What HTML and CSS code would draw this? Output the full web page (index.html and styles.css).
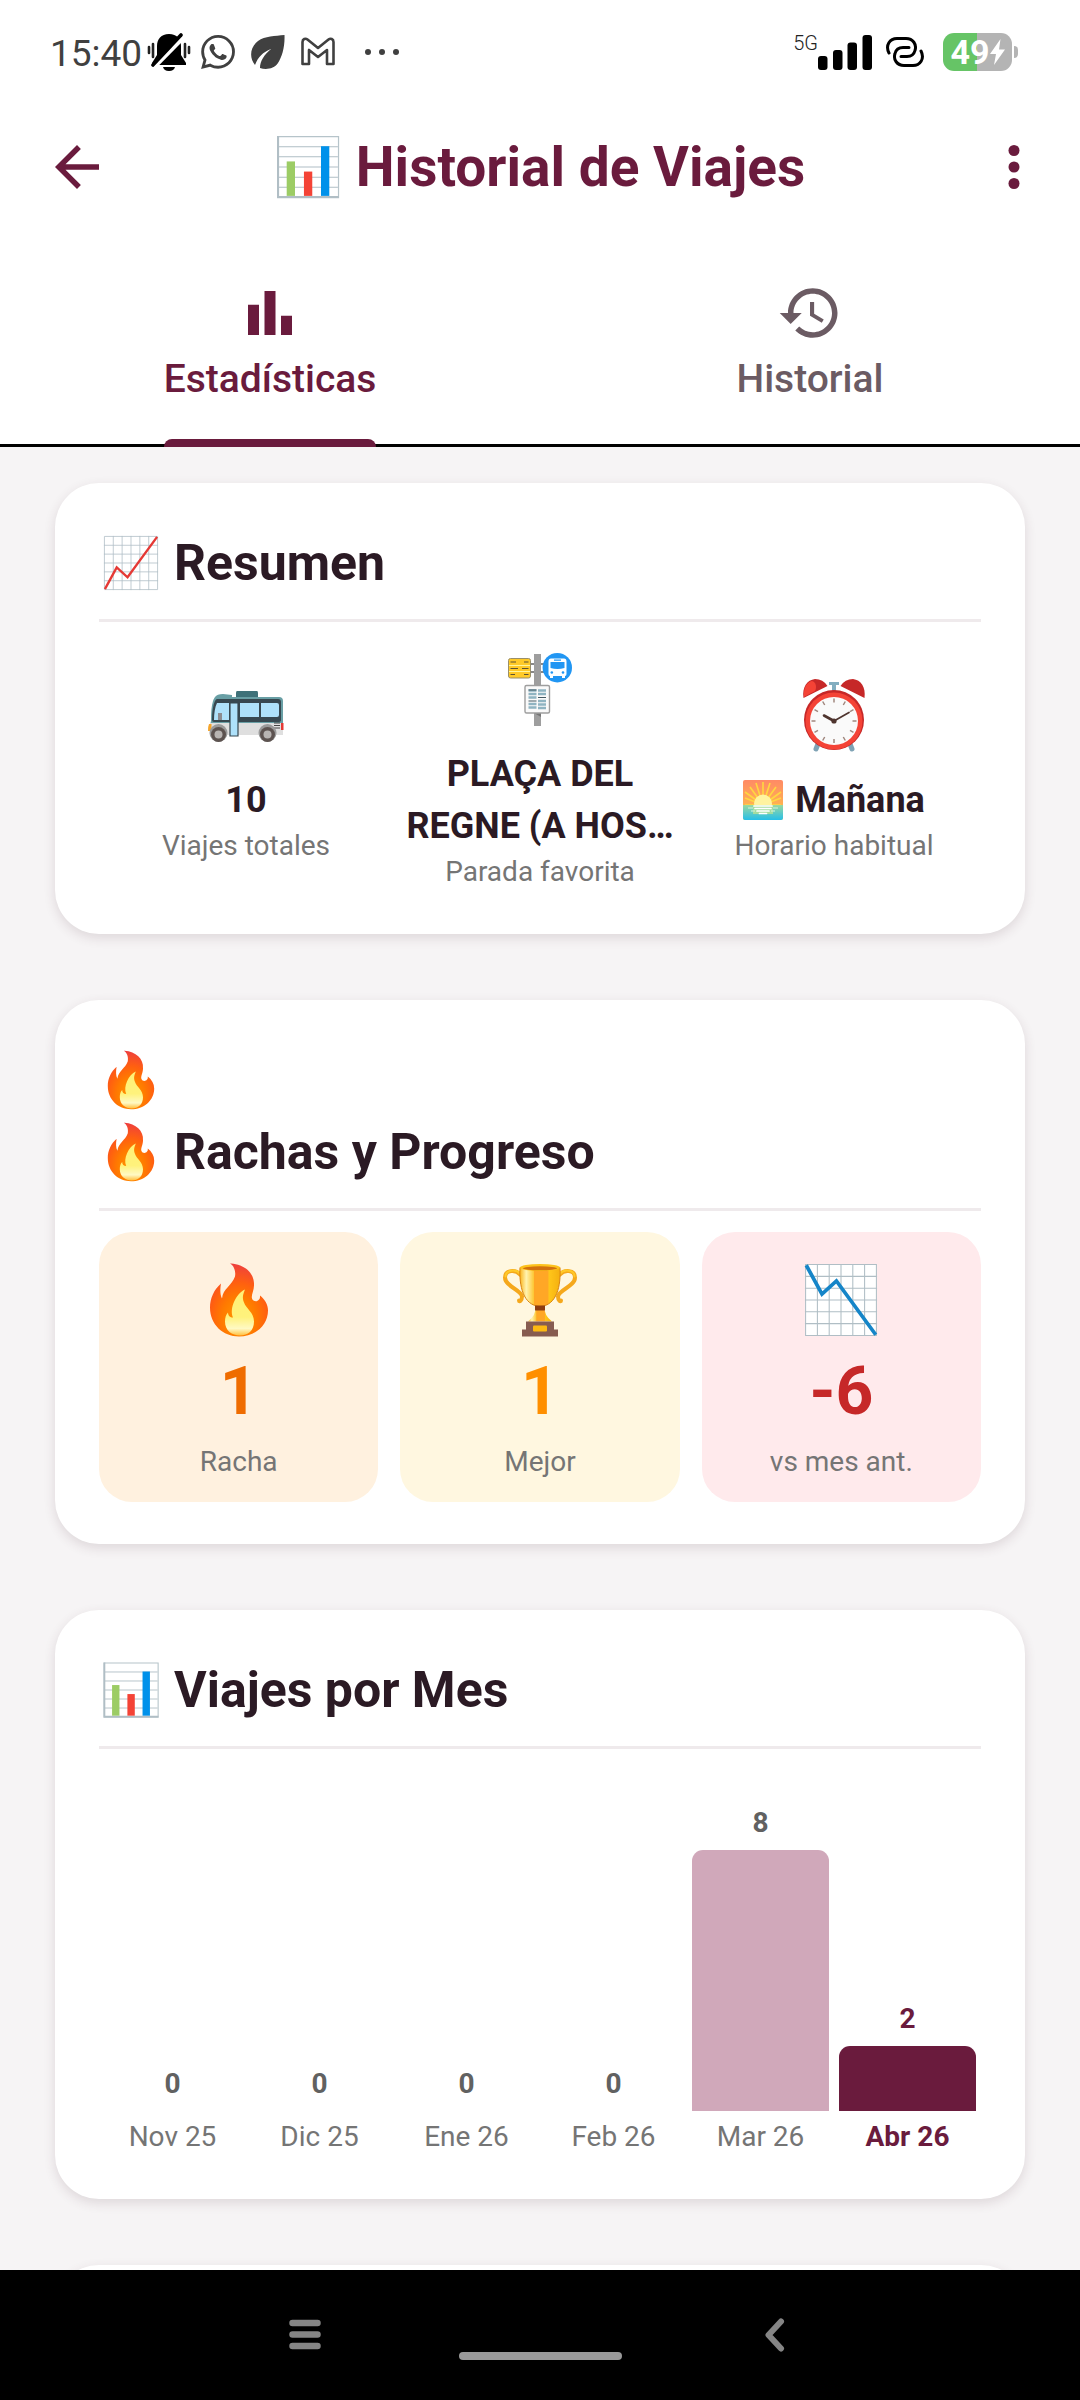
FILE: index.html
```html
<!DOCTYPE html>
<html lang="es">
<head>
<meta charset="utf-8">
<meta name="viewport" content="width=device-width, initial-scale=1">
<title>Historial de Viajes</title>
<link rel="stylesheet" href="styles.css">
</head>
<body>
<svg class="defs" aria-hidden="true">
  <defs>
    <radialGradient id="flame" cx="0.5" cy="0.75" r="0.75">
      <stop offset="0" stop-color="#ff9800"/>
      <stop offset="0.4" stop-color="#ff7a00"/>
      <stop offset="0.65" stop-color="#ff6010"/>
      <stop offset="1" stop-color="#ee3f3f"/>
    </radialGradient>
    <linearGradient id="flame-core" x1="0" y1="0" x2="0" y2="1">
      <stop offset="0" stop-color="#fff176"/>
      <stop offset="0.6" stop-color="#fff27c"/>
      <stop offset="0.85" stop-color="#fff9c4"/>
      <stop offset="1" stop-color="#ffc040"/>
    </linearGradient>
    <linearGradient id="sky" x1="0" y1="0" x2="0" y2="1">
      <stop offset="0" stop-color="#ff8a65"/>
      <stop offset="1" stop-color="#ffc947"/>
    </linearGradient>
    <linearGradient id="sea" x1="0" y1="0" x2="0" y2="1">
      <stop offset="0" stop-color="#9bd8a0"/>
      <stop offset="1" stop-color="#26bfe8"/>
    </linearGradient>
    <linearGradient id="gold" x1="0" y1="0" x2="1" y2="0">
      <stop offset="0" stop-color="#fbb51c"/>
      <stop offset="0.16" stop-color="#fff3b0"/>
      <stop offset="0.34" stop-color="#fdc838"/>
      <stop offset="0.36" stop-color="#ffa726"/>
      <stop offset="0.7" stop-color="#ffa726"/>
      <stop offset="0.72" stop-color="#ffc61a"/>
      <stop offset="1" stop-color="#f5b010"/>
    </linearGradient>
    <symbol id="e-bars" viewBox="-5 -5 71 71">
      <path fill="#fff" d="M0 0h61v61H0z"/>
      <path stroke="#b0bec5" stroke-width="1" d="M1 10.500h59M1 20.500h59M1 30.500h59M1 40.500h59M1 50.500h59"/>
      <path fill="none" stroke="#b6c4ca" stroke-width="1.200" d="M.6 .6h60v60H.6z"/>
      <path stroke="#b0bec5" stroke-width="2" d="M1 0v61M0 60h61"/>
      <path fill="#9ccc65" d="M9.500 25h8.200v34H9.500z"/>
      <path fill="#f44336" d="M26.500 35h8.200v24h-8.200z"/>
      <path fill="#0091ea" d="M43.300 10h8.200v49h-8.200z"/>
    </symbol>
    <g id="grid">
      <path fill="#fff" d="M0 0h55v55H0z"/>
      <path stroke="#b0bec5" stroke-width=".8" fill="none" d="M.5 .5h54v54H.5zM9.500 0v55M18.500 0v55M27.500 0v55M36.500 0v55M45.500 0v55M0 9.500h55M0 18.500h55M0 27.500h55M0 36.500h55M0 45.500h55"/>
    </g>
    <symbol id="e-up" viewBox="-5 -5 65 65">
      <use href="#grid"/>
      <path fill="none" stroke="#e53935" stroke-width="2.400" d="M1 54 13 32l11 10L54 1"/>
    </symbol>
    <symbol id="e-down" viewBox="-3 -3 61 61">
      <use href="#grid"/>
      <path fill="none" stroke="#1585c8" stroke-width="2.800" d="M1 1l12 22 11-10 30 41"/>
    </symbol>
    <symbol id="e-fire" viewBox="-11 -3.500 80 80">
      <path fill="url(#flame)" d="M21 0C35 1 45 10 44 22c0 5-3 10-2 13 1 3 5 4 7 1 1-1 1-2 1-4 5 4 8 9 8 15 0 15-13 26-29 26S0 61 0 44c0-9 4-18 11-24-1 6-1 11 1 15C13 25 22 22 25 13c1-5-1-11-5-13z"/>
      <path fill="url(#flame-core)" d="M35 26c-2 5-3 8-1 13 2 6 10 10 10 19 0 9-6 14-14 14s-15-5-15-14c0-4 1-7 3-9 0 3 2 5 5 5-4-9 3-24 12-28z"/>
    </symbol>
    <symbol id="e-bus" viewBox="-2 -15 80 80">
      <path fill="#3f7179" d="M29 0h20q1 0 1 2v4H28V2q0-2 1-2z"/>
      <path fill="#699fa5" d="M3 30C3 18 4 10 7 6q2-3 8-3l9 1v2h47q4 0 4 4v24H2z"/>
      <path fill="#dfdfdf" d="M2 32h73v12H2z"/>
      <path fill="#374850" d="M9 8h61q3 0 3 3v18q0 2-3 2H6q-2 0-2-2c0-8 1-15 3-19q1-2 2-2z"/>
      <path fill="#aee1fa" d="M9 12h12v17H6c0-7 1-13 3-17zM32 12h19v14H32zM53 12h16q2 0 2 2v10q0 2-2 2H53z"/>
      <path fill="#aee1fa" stroke="#374850" stroke-width="1.200" d="M22 12h8v33h-8z"/>
      <path fill="#8c8c90" d="M10 22h4v7h-4z"/>
      <path fill="#f5a52c" d="M1 33h2.500v7H0q0-5 1-7z"/>
      <path fill="#e53935" d="M73 32h2.500v7H73z"/>
      <path stroke="#444" stroke-width="1" d="M66 32h6M66 34.500h6M66 37h6"/>
      <g fill="#5d5350"><circle cx="10.500" cy="42" r="9" fill="#9a9a9a"/><circle cx="59.500" cy="42" r="9" fill="#9a9a9a"/><circle cx="10.500" cy="43.500" r="7.500"/><circle cx="59.500" cy="43.500" r="7.500"/></g>
      <g fill="#b8b4b2"><circle cx="10.500" cy="43.500" r="4"/><circle cx="59.500" cy="43.500" r="4"/></g>
    </symbol>
    <symbol id="e-stop" viewBox="-8 -3 80 80">
      <path fill="#9e9e9e" d="M26 1h7v72h-7z"/>
      <path fill="#757575" d="M26 60h7v4z"/>
      <path stroke="#616161" stroke-width="1.500" d="M22 11h4M22 19h4M33 11h5M33 19h5"/>
      <rect x=".5" y="5.500" width="22" height="19.500" rx="2" fill="#ffca28" stroke="#9a8f6a"/>
      <path stroke="#fff59d" stroke-width="1.200" d="M1 12.500h21M1 18.500h21"/>
      <path stroke="#5c5234" stroke-width="1.100" d="M2.500 9H8M16 9h4.500M2.500 15.500H10M14 15.500h6.500M2.500 21.500H7M16 21.500h4.500"/>
      <circle cx="49.300" cy="14.700" r="14.700" fill="#2196f3"/>
      <path fill="#fff" d="M43 5.500h13q2.500 0 2.500 3V21q0 2-1.500 2v2h-3v-2h-9v2h-3v-2q-1.500 0-1.500-2V8.500q0-3 2.500-3z"/>
      <path fill="#2196f3" d="M46 6.500h7v1.300h-7zM42.500 9h14v6q-7 2-14 0z"/>
      <circle cx="43.800" cy="19.500" r="1.300" fill="#2196f3"/><circle cx="55" cy="19.500" r="1.300" fill="#2196f3"/>
      <rect x="17" y="32.500" width="24.500" height="27.500" rx="1.500" fill="#fafafa" stroke="#9e9e9e" stroke-width="1.400"/>
      <path stroke="#8fb4c2" stroke-width="2.600" d="M20.500 37.500h8M20.500 41h8M20.500 44.500h8M20.500 51h8M20.500 54.500h8M30 37.500h8M30 41h8M30 48h8M30 51.500h8M30 55h8"/>
      <path stroke="#455a64" stroke-width="1.200" d="M20.500 37h8M20.500 48h8M30 44.500h8"/>
    </symbol>
    <symbol id="e-clock" viewBox="-9 -3 80 80">
      <path stroke="#7fa3b5" stroke-width="5" stroke-linecap="round" d="M15 65l-2 5M47 65l2 5"/>
      <path fill="#82aec0" d="M26 3h10v3h-3v7h-4V6h-3z"/>
      <path fill="#c62828" d="M.5 19C-1 8 4 1 12 0q8 0 12.500 7zM61.500 19C63 8 58 1 50 0q-8 0-12.500 7z"/>
      <path fill="#f44336" d="M1 18C0 9 4 3 9 2c4 1 5 6 3 10z"/>
      <circle cx="31" cy="41" r="30" fill="#c62828"/>
      <circle cx="31" cy="42" r="28.500" fill="#f44336"/>
      <circle cx="31" cy="42" r="24" fill="#fafafa"/>
      <path stroke="#a1887f" stroke-width="1.500" d="M31 19.500v4M31 60v4M8.500 42h4M49.500 42h4M19.700 22.500l2 3.500M42.300 22.500l-2 3.500M11.500 30.700l3.500 2M50.500 30.700l-3.500 2M11.500 53.300l3.500-2M50.500 53.300l-3.500-2M19.700 61.500l2-3.500M42.300 61.500l-2-3.500"/>
      <path stroke="#4e342e" stroke-width="2.600" stroke-linecap="round" d="M31 42l-10-5.500"/>
      <path stroke="#4e342e" stroke-width="1.700" stroke-linecap="round" d="M31 42l15-8.500"/>
      <circle cx="31" cy="42" r="2.600" fill="#4e342e"/>
    </symbol>
    <symbol id="e-sunrise" viewBox="0 0 40 40">
      <rect width="40" height="40" rx="2" fill="url(#sky)"/>
      <path stroke="#ffd740" stroke-width="1.600" d="M20 25V2M20 25 13 3M20 25 27 3M20 25 7 7M20 25 33 7M20 25 2 12M20 25 38 12M20 25 2 18M20 25 38 18M20 25H2M20 25h18"/>
      <path fill="url(#sea)" d="M0 25h40v13q0 2-2 2H2q-2 0-2-2z"/>
      <circle cx="20" cy="23.500" r="9" fill="#fff3a0"/>
      <path fill="#a4dca0" d="M10 25h20v9H10z"/>
      <path stroke="#fff" stroke-width="1.700" stroke-linecap="round" d="M11 26h18M12 28.500h16M14 31h12M16.500 33.500h7"/>
      <path stroke="#d6f3dc" stroke-width="1" d="M5 28h5M8 31h4M30 28h5M28 31h4"/>
    </symbol>
    <symbol id="e-trophy" viewBox="-3 -3.500 80 80">
      <path fill="none" stroke="#f5a81c" stroke-width="4" stroke-linecap="round" d="M17 11C13 6 2 6 2 14c0 9 16 12 17 19 0 4-3 6-3 4M57 11c4-5 15-5 15 3 0 9-16 12-17 19 0 4 3 6 3 4"/>
      <path fill="none" stroke="#ffc928" stroke-width="2" stroke-linecap="round" d="M17 10C13 5.500 2.500 6 2.500 13M57 10c4-4.500 14.500-4 14.500 3"/>
      <path fill="url(#gold)" d="M33 42h8q0 10 8 16H25q8-6 8-16z"/>
      <path fill="url(#gold)" stroke="#d98410" stroke-width="1" d="M17 4h40c1 18-3 38-20 39C20 42 16 22 17 4z"/>
      <ellipse cx="37" cy="4" rx="20" ry="3.500" fill="#fdc21c"/>
      <ellipse cx="37" cy="4.800" rx="17" ry="2" fill="#d2700e"/>
      <path fill="#8d3d12" d="M32 42h10v5H32z"/>
      <path fill="#875c50" d="M23 58h28v8h4v7H19v-7h4z"/>
      <rect x="30" y="62" width="14" height="6" rx="1" fill="#fcb912"/>
    </symbol>
  </defs>
</svg>

<div class="app">
  <header class="status">
    <div class="status-left">
      <span class="time">15:40</span>
      <svg class="ic-bell" viewBox="0 0 44 38" aria-hidden="true">
        <path d="M22 1c8 0 12 5 12 12v9l5 8v2H5v-2l5-8v-9C10 6 14 1 22 1zM16 34h12q-1 4-6 4t-6-4z"/>
        <path d="M2 14v6M6 11v13M38 11v13M42 14v6" stroke="#222" stroke-width="2.600" stroke-linecap="round"/>
        <path d="M3 37 34 6" stroke="#fff" stroke-width="3"/>
        <path d="M6 32 34 2" stroke="#000" stroke-width="3.600" stroke-linecap="round"/>
        <path d="M8 34.500 37 5" stroke="#fff" stroke-width="2.500"/>
      </svg>
      <div class="notes">
        <svg class="ic-note" viewBox="0 0 24 24" fill="#404040" aria-hidden="true"><path d="M17.472 14.382c-.297-.149-1.758-.867-2.030-.967-.273-.099-.471-.148-.67.15-.197.297-.767.966-.94 1.164-.173.199-.347.223-.644.075-.297-.15-1.255-.463-2.390-1.475-.883-.788-1.480-1.761-1.653-2.059-.173-.297-.018-.458.13-.606.134-.133.298-.347.446-.52.149-.174.198-.298.298-.497.099-.198.05-.371-.025-.52-.075-.149-.669-1.612-.916-2.207-.242-.579-.487-.5-.669-.51-.173-.008-.371-.01-.57-.01-.198 0-.52.074-.792.372-.272.297-1.040 1.016-1.040 2.479 0 1.462 1.065 2.875 1.213 3.074.149.198 2.096 3.200 5.077 4.487.709.306 1.262.489 1.694.625.712.227 1.360.195 1.871.118.571-.085 1.758-.719 2.006-1.413.248-.694.248-1.289.173-1.413-.074-.124-.272-.198-.57-.347m-5.421 7.403h-.004a9.870 9.870 0 01-5.031-1.378l-.361-.214-3.741.982.998-3.648-.235-.374a9.860 9.860 0 01-1.510-5.260c.001-5.450 4.436-9.884 9.888-9.884 2.640 0 5.122 1.030 6.988 2.898a9.825 9.825 0 012.893 6.994c-.003 5.450-4.437 9.884-9.885 9.884m8.413-18.297A11.815 11.815 0 0012.050 0C5.495 0 .16 5.335.157 11.892c0 2.096.547 4.142 1.588 5.945L.057 24l6.305-1.654a11.882 11.882 0 005.683 1.448h.005c6.554 0 11.890-5.335 11.893-11.893a11.821 11.821 0 00-3.480-8.413z"/></svg>
        <svg class="ic-note" viewBox="0 0 34 34" fill="#404040" aria-hidden="true"><path d="M33.500 0C34 12 31 22 27 28c-4 6-12 7-18 5 0-7 4-13 11-19C12 17 7 22 4 30-2 23-1 12 7 6 14 1 24 1 33.500 0z"/></svg>
        <svg class="ic-note" viewBox="0 0 34 34" fill="none" stroke="#404040" stroke-width="2.600" stroke-linejoin="round" aria-hidden="true"><path d="M1.500 29V7c0-3 3-4 5-2.500L17 13 27.500 4.500c2-1.500 5-.5 5 2.500v22h-6.500V15L17 22 8 15v14z"/></svg>
      </div>
      <svg class="ic-dots" viewBox="0 0 34 6" fill="#404040" aria-hidden="true"><circle cx="3" cy="3" r="3"/><circle cx="17" cy="3" r="3"/><circle cx="31" cy="3" r="3"/></svg>
    </div>
    <div class="status-right">
      <span class="net">5G</span>
      <svg class="ic-signal" viewBox="0 0 54 35" aria-hidden="true"><rect y="21" width="9.500" height="14" rx="3"/><rect x="15" y="15" width="9.500" height="20" rx="3"/><rect x="29.500" y="7.500" width="9.500" height="27.500" rx="3"/><rect x="44.500" width="9.500" height="35" rx="3"/></svg>
      <svg class="ic-link" viewBox="0 0 38 30" fill="none" stroke="#000" stroke-width="3" stroke-linecap="round" aria-hidden="true"><path d="M3 16C-1 8 4 1.500 11 1.500h9c7 0 11 6 9 12-1 4-4 6-8 6h-6"/><path d="M35 14c4 8-1 14.500-8 14.500h-9c-7 0-11-6-9-12 1-4 4-6 8-6h6"/></svg>
      <div class="battery">
        <span class="charge">49</span>
        <svg class="ic-bolt" viewBox="0 0 15 26" fill="#fff" aria-hidden="true"><path d="M10.500 0 0 15h6l-2 11L15 10.500H9z"/></svg>
      </div>
    </div>
  </header>

  <div class="topbar">
    <button class="icon-btn" type="button" aria-label="Atrás">
      <svg class="ic" viewBox="0 0 24 24" fill="currentColor"><path d="M20 11H7.830l5.590-5.590L12 4l-8 8 8 8 1.410-1.410L7.830 13H20z"/></svg>
    </button>
    <h1 class="title"><svg class="title-emoji" aria-hidden="true"><use href="#e-bars"/></svg>Historial de Viajes</h1>
    <button class="icon-btn" type="button" aria-label="Más opciones">
      <svg class="ic" viewBox="0 0 24 24" fill="currentColor"><circle cx="12" cy="6" r="2"/><circle cx="12" cy="12" r="2"/><circle cx="12" cy="18" r="2"/></svg>
    </button>
  </div>

  <nav class="tabs">
    <button class="tab tab-active" type="button">
      <svg class="ic" viewBox="0 0 24 24" fill="currentColor" aria-hidden="true"><path d="M10 20h4V4h-4zM4 20h4V9H4zM16 13v7h4v-7z"/></svg>
      <span class="tab-label">Estadísticas</span>
    </button>
    <button class="tab" type="button">
      <svg class="ic" viewBox="0 0 24 24" fill="currentColor" aria-hidden="true"><path d="M13 3c-4.970 0-9 4.030-9 9H1l3.890 3.890.07.14L9 12H6c0-3.870 3.130-7 7-7s7 3.130 7 7-3.130 7-7 7c-1.930 0-3.680-.79-4.940-2.060l-1.420 1.420C8.270 19.990 10.510 21 13 21c4.970 0 9-4.030 9-9s-4.030-9-9-9zm-1 5v5l4.280 2.540.72-1.210-3.500-2.080V8H12z"/></svg>
      <span class="tab-label">Historial</span>
    </button>
  </nav>

  <main class="content">
    <section class="card">
      <h2 class="card-head"><svg class="head-emoji" aria-hidden="true"><use href="#e-up"/></svg>Resumen</h2>
      <div class="summary">
        <div class="stat">
          <svg class="emoji" aria-hidden="true"><use href="#e-bus"/></svg>
          <strong class="stat-value">10</strong>
          <span class="label">Viajes totales</span>
        </div>
        <div class="stat">
          <svg class="emoji" aria-hidden="true"><use href="#e-stop"/></svg>
          <strong class="stat-value">PLAÇA DEL<br>REGNE (A HOS…</strong>
          <span class="label">Parada favorita</span>
        </div>
        <div class="stat">
          <svg class="emoji" aria-hidden="true"><use href="#e-clock"/></svg>
          <strong class="stat-value"><svg class="inline-emoji" aria-hidden="true"><use href="#e-sunrise"/></svg>Mañana</strong>
          <span class="label">Horario habitual</span>
        </div>
      </div>
    </section>

    <section class="card">
      <h2 class="card-head card-head-stacked">
        <span class="head-row"><svg class="head-emoji" aria-hidden="true"><use href="#e-fire"/></svg></span>
        <span class="head-row"><svg class="head-emoji" aria-hidden="true"><use href="#e-fire"/></svg>Rachas y Progreso</span>
      </h2>
      <div class="tiles">
        <div class="tile tile-orange">
          <svg class="emoji" aria-hidden="true"><use href="#e-fire"/></svg>
          <strong class="tile-value">1</strong>
          <span class="label">Racha</span>
        </div>
        <div class="tile tile-amber">
          <svg class="emoji" aria-hidden="true"><use href="#e-trophy"/></svg>
          <strong class="tile-value">1</strong>
          <span class="label">Mejor</span>
        </div>
        <div class="tile tile-red">
          <svg class="emoji" aria-hidden="true"><use href="#e-down"/></svg>
          <strong class="tile-value">-6</strong>
          <span class="label">vs mes ant.</span>
        </div>
      </div>
    </section>

    <section class="card">
      <h2 class="card-head"><svg class="head-emoji" aria-hidden="true"><use href="#e-bars"/></svg>Viajes por Mes</h2>
      <div class="chart">
        <div class="month"><span class="count">0</span><div class="bar" style="height:0"></div><span class="label">Nov 25</span></div>
        <div class="month"><span class="count">0</span><div class="bar" style="height:0"></div><span class="label">Dic 25</span></div>
        <div class="month"><span class="count">0</span><div class="bar" style="height:0"></div><span class="label">Ene 26</span></div>
        <div class="month"><span class="count">0</span><div class="bar" style="height:0"></div><span class="label">Feb 26</span></div>
        <div class="month"><span class="count">8</span><div class="bar" style="height:261px"></div><span class="label">Mar 26</span></div>
        <div class="month month-now"><span class="count">2</span><div class="bar" style="height:65px"></div><span class="label">Abr 26</span></div>
      </div>
    </section>

    <section class="card"></section>
  </main>

  <footer class="sysnav">
    <button class="sys-btn" type="button" aria-label="Recientes">
      <svg class="sys-ic" viewBox="0 0 32 34" stroke="#858585" stroke-width="6.500" stroke-linecap="round"><path d="M3.500 5h25M3.500 16.500h25M3.500 28h25"/></svg>
    </button>
    <button class="sys-home" type="button" aria-label="Inicio"></button>
    <button class="sys-btn" type="button" aria-label="Volver">
      <svg class="sys-ic" viewBox="0 0 32 34" fill="none" stroke="#858585" stroke-width="6" stroke-linecap="round" stroke-linejoin="round"><path d="M21 3.500 8.500 17 21 30.500"/></svg>
    </button>
  </footer>
</div>
</body>
</html>
```
FILE: styles.css
```css
:root {
  --wine: #6a1b3d;
  --ink: #2b1a24;
  --grey: #757575;
}

* {
  box-sizing: border-box;
}

body {
  margin: 0;
  font-family: Roboto, "Noto Sans", sans-serif;
  background: #fff;
  color: var(--ink);
}

h1, h2 {
  margin: 0;
}

button {
  border: 0;
  padding: 0;
  background: none;
  font: inherit;
  color: inherit;
}

svg {
  display: block;
  flex: none;
}

.defs {
  position: absolute;
  width: 0;
  height: 0;
}

.app {
  display: flex;
  flex-direction: column;
  height: 100vh;
}

/* Status bar */
.status {
  display: flex;
  justify-content: space-between;
  align-items: center;
  flex: none;
  height: 104px;
  padding: 0 68px 0 50px;
}

.status-left,
.status-right,
.notes {
  display: flex;
  align-items: center;
}

.time {
  font-size: 37px;
  line-height: 44px;
  color: #404040;
  padding-top: 4px;
}

.ic-bell {
  width: 44px;
  height: 38px;
  margin: 0 10px 0 5px;
}

.notes {
  gap: 16px;
}

.ic-note {
  width: 34px;
  height: 34px;
}

.ic-dots {
  width: 34px;
  height: 6px;
  margin-left: 30px;
}

.net {
  align-self: flex-start;
  font-size: 20px;
  line-height: 20px;
  font-weight: 300;
  color: #222;
}

.ic-signal {
  width: 54px;
  height: 35px;
}

.ic-link {
  width: 38px;
  height: 30px;
  margin: 0 19px 0 14px;
}

.battery {
  position: relative;
  display: flex;
  align-items: center;
  justify-content: center;
  width: 69px;
  height: 38px;
  border-radius: 11px;
  background: linear-gradient(90deg, #66c466 49%, #b4b4b4 49%);
  color: #fff;
}

.battery::after {
  content: "";
  position: absolute;
  left: 71px;
  top: 13px;
  width: 4px;
  height: 12px;
  border-radius: 0 4px 4px 0;
  background: #b4b4b4;
}

.charge {
  font-size: 34px;
  line-height: 38px;
  font-weight: 700;
}

.ic-bolt {
  width: 15px;
  height: 26px;
}

/* App bar */
.topbar {
  display: flex;
  align-items: center;
  flex: none;
  height: 126px;
  padding: 0 33px 0 44px;
  color: var(--wine);
}

.icon-btn,
.ic {
  width: 66px;
  height: 66px;
}

.title {
  display: flex;
  flex: 1;
  align-items: center;
  justify-content: center;
  gap: 12px;
  padding-right: 14px;
  font-size: 55px;
  line-height: 72px;
  font-weight: 700;
}

.title-emoji {
  width: 72px;
  height: 72px;
}

/* Tabs */
.tabs {
  display: flex;
  flex: none;
  border-bottom: 3px solid #000;
}

.tab {
  display: flex;
  flex: 1;
  flex-direction: column;
  align-items: center;
  gap: 7px;
  padding-top: 50px;
  color: #6b5b63;
}

.tab-label {
  position: relative;
  padding-bottom: 39px;
  font-size: 39px;
  line-height: 52px;
  font-weight: 500;
}

.tab-active {
  color: var(--wine);
}

.tab-active .tab-label::after {
  content: "";
  position: absolute;
  left: 0;
  right: 0;
  bottom: -3px;
  height: 8px;
  border-radius: 8px 8px 0 0;
  background: var(--wine);
}

/* Content */
.content {
  display: flex;
  flex: 1;
  flex-direction: column;
  gap: 66px;
  min-height: 0;
  padding: 36px 55px;
  overflow-y: auto;
  scrollbar-width: none;
  background: #f6f4f5;
}

.card {
  flex: none;
  min-height: 200px;
  padding: 44px 44px 42px;
  border-radius: 44px;
  background: #fff;
  box-shadow: 0 4px 12px rgba(80, 40, 60, 0.14);
}

.card-head {
  display: flex;
  align-items: center;
  gap: 11px;
  padding-bottom: 20px;
  border-bottom: 3px solid #efeaec;
  font-size: 50px;
  line-height: 72px;
  font-weight: 700;
}

.card-head-stacked {
  flex-direction: column;
  align-items: flex-start;
  gap: 0;
}

.head-row {
  display: flex;
  align-items: center;
  gap: 11px;
  height: 72px;
}

.head-emoji {
  width: 64px;
  height: 64px;
}

.emoji {
  width: 80px;
  height: 80px;
}

.label {
  font-size: 28px;
  line-height: 40px;
  color: var(--grey);
  white-space: nowrap;
}

/* Summary */
.summary {
  display: grid;
  grid-template-columns: repeat(3, 1fr);
  align-items: center;
  padding-top: 28px;
}

.stat {
  display: flex;
  flex-direction: column;
  align-items: center;
}

.stat-value {
  display: flex;
  align-items: center;
  gap: 12px;
  margin-top: 18px;
  font-size: 36px;
  line-height: 52px;
  font-weight: 700;
  text-align: center;
  white-space: nowrap;
}

.inline-emoji {
  width: 40px;
  height: 40px;
}

/* Streak tiles */
.tiles {
  display: grid;
  grid-template-columns: repeat(3, 1fr);
  gap: 22px;
  padding-top: 21px;
}

.tile {
  display: flex;
  flex-direction: column;
  align-items: center;
  padding: 28px 0 20px;
  border-radius: 33px;
}

.tile-value {
  margin: 12px 0 10px;
  font-size: 66px;
  line-height: 80px;
  font-weight: 700;
}

.tile-orange {
  background: #fff1df;
}

.tile-orange .tile-value {
  color: #ef6c00;
}

.tile-amber {
  background: #fff7e0;
}

.tile-amber .tile-value {
  color: #ff8f00;
}

.tile-red {
  background: #ffeaec;
}

.tile-red .tile-value {
  color: #c62828;
}

/* Monthly chart */
.chart {
  display: grid;
  grid-template-columns: repeat(6, 1fr);
  align-items: end;
  padding-top: 55px;
}

.month {
  display: flex;
  flex-direction: column;
  align-items: center;
  padding: 0 5px;
}

.count {
  margin-bottom: 8px;
  font-size: 28px;
  line-height: 38px;
  font-weight: 700;
  color: #616161;
}

.bar {
  align-self: stretch;
  margin-bottom: 6px;
  border-radius: 11px 11px 0 0;
  background: #d0a8ba;
}

.month-now .bar {
  background: var(--wine);
}

.month-now .count,
.month-now .label {
  font-weight: 700;
  color: var(--wine);
}

/* System navigation */
.sysnav {
  display: flex;
  flex: none;
  align-items: center;
  justify-content: center;
  gap: 138px;
  height: 130px;
  background: #000;
}

.sys-ic {
  width: 32px;
  height: 34px;
}

.sys-home {
  width: 163px;
  height: 8px;
  margin-top: 42px;
  border-radius: 4px;
  background: #999;
}
```
